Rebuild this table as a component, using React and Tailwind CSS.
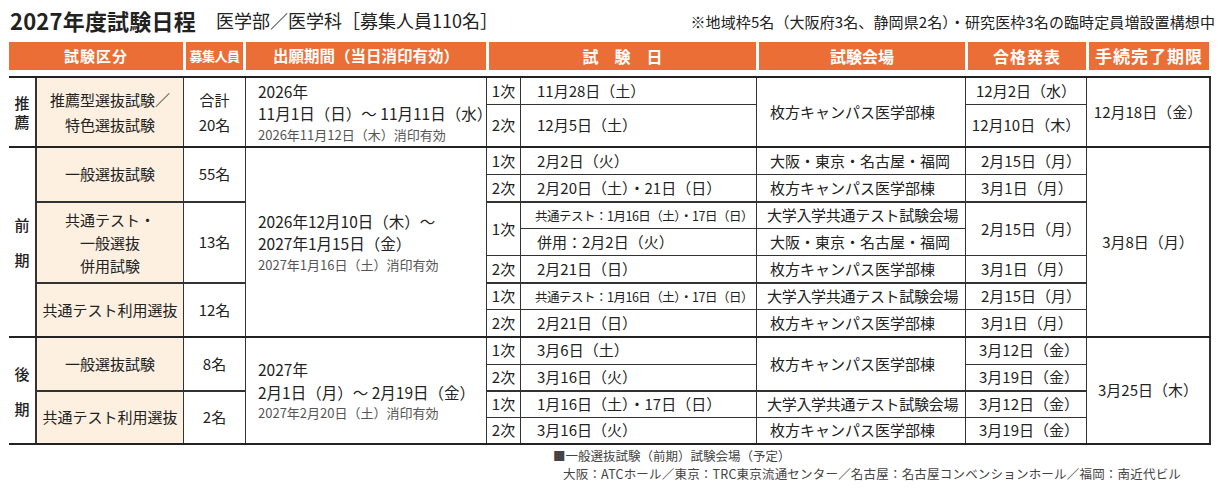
import React from 'react';

const font = "font-['Noto_Sans_CJK_JP','Noto_Sans',sans-serif]";
const cols = 'grid grid-cols-[26px_147px_61px_240px_33px_235px_208px_120px_122px] gap-px bg-[#333]';
const beige = 'bg-[#fdf0e1]';
// group start: thicker line on top
const g = 'border-t border-[#333]';

function C({ className = '', children }) {
  return <div className={`flex items-center bg-white ${className}`}>{children}</div>;
}

function B({ className = '', children }) {
  return (
    <div className={`flex items-center justify-center text-center border-l border-[#333] ${beige} ${className}`}>
      {children}
    </div>
  );
}

function Side({ a, b, gap = 'gap-[20px]' }) {
  return (
    <div className={`flex flex-col items-center ${gap} font-medium leading-none`}>
      <span>{a}</span>
      <span>{b}</span>
    </div>
  );
}

function Apply({ lines, note }) {
  return (
    <div className="pl-[12px] flex flex-col">
      {lines.map((l, i) => (
        <span key={i} className="text-[15.5px] leading-[22.5px]">{l}</span>
      ))}
      <span className="text-[13px] leading-[20px] text-[#555]">{note}</span>
    </div>
  );
}

const small = 'text-[12.5px] tracking-[-0.5px]';

export default function App() {
  return (
    <div className={`${font} w-[1220px] h-[492px] bg-white text-[#222] px-[9px] pt-[5px]`}>
      {/* title */}
      <div className="flex items-center h-[30px]">
        <span className="text-[22px] font-bold tracking-[0.2px] pl-[1px]">2027年度試験日程</span>
        <span className="text-[18px] ml-[20px]">医学部／医学科［募集人員110名］</span>
        <span className="ml-auto mr-[-4px] text-[15px] tracking-[0.1px] mt-[4px]">
          ※地域枠5名（大阪府3名、静岡県2名）・研究医枠3名の臨時定員増設置構想中
        </span>
      </div>

      {/* header */}
      <div className="flex gap-[3px] h-[28px] mt-[7px] text-white font-bold">
        <div className="w-[174px] bg-[#ea6e36] flex items-center justify-center text-[15px] tracking-[1px]">試験区分</div>
        <div className="w-[57px] bg-[#ea6e36] flex items-center justify-center text-[13px] tracking-[-0.5px]">募集人員</div>
        <div className="w-[240px] bg-[#ea6e36] flex items-center justify-center text-[15.5px]">出願期間（当日消印有効）</div>
        <div className="w-[267px] bg-[#ea6e36] flex items-center justify-center text-[16px]">試　験　日</div>
        <div className="w-[206px] bg-[#ea6e36] flex items-center justify-center text-[16px]">試験会場</div>
        <div className="w-[118px] bg-[#ea6e36] flex items-center justify-center text-[16px] tracking-[1px]">合格発表</div>
        <div className="w-[120px] bg-[#ea6e36] flex items-center justify-center text-[17px] tracking-[1px]">手続完了期限</div>
      </div>

      {/* body */}
      <div className="mt-[6px] border-y-2 border-[#222] divide-y-2 divide-[#222] text-[15px] leading-tight">
        {/* 推薦 */}
        <div className={`${cols} grid-rows-[26px_41px]`}>
          <C className="col-start-1 row-start-1 row-span-2 justify-center"><Side a="推" b="薦" gap="gap-[4px]" /></C>
          <B className="col-start-2 row-start-1 row-span-2">
            <div className="leading-[25px]">推薦型選抜試験／<br />特色選抜試験</div>
          </B>
          <C className="col-start-3 row-start-1 row-span-2 justify-center text-center">
            <div className="leading-[25px]">合計<br />20名</div>
          </C>
          <C className="col-start-4 row-start-1 row-span-2">
            <Apply lines={['2026年', '11月1日（日）～ 11月11日（水）']} note="2026年11月12日（木）消印有効" />
          </C>
          <C className="col-start-5 row-start-1 justify-center">1次</C>
          <C className="col-start-6 row-start-1 pl-[16px]">11月28日（土）</C>
          <C className="col-start-5 row-start-2 justify-center">2次</C>
          <C className="col-start-6 row-start-2 pl-[16px]">12月5日（土）</C>
          <C className="col-start-7 row-start-1 row-span-2 pl-[13px]">枚方キャンパス医学部棟</C>
          <C className="col-start-8 row-start-1 justify-center">12月2日（水）</C>
          <C className="col-start-8 row-start-2 justify-center">12月10日（木）</C>
          <C className="col-start-9 row-start-1 row-span-2 justify-center">12月18日（金）</C>
        </div>

        {/* 前期 */}
        <div className={`${cols} grid-rows-[repeat(7,26px)]`}>
          <C className="col-start-1 row-start-1 row-span-7 justify-center"><Side a="前" b="期" /></C>
          <B className="col-start-2 row-start-1 row-span-2">一般選抜試験</B>
          <B className={`col-start-2 row-start-3 row-span-3 ${g}`}>
            <div className="leading-[23px]">共通テスト・<br />一般選抜<br />併用試験</div>
          </B>
          <B className={`col-start-2 row-start-6 row-span-2 ${g}`}>共通テスト利用選抜</B>
          <C className="col-start-3 row-start-1 row-span-2 justify-center">55名</C>
          <C className={`col-start-3 row-start-3 row-span-3 justify-center ${g}`}>13名</C>
          <C className={`col-start-3 row-start-6 row-span-2 justify-center ${g}`}>12名</C>
          <C className="col-start-4 row-start-1 row-span-7">
            <Apply lines={['2026年12月10日（木）～', '2027年1月15日（金）']} note="2027年1月16日（土）消印有効" />
          </C>

          <C className="col-start-5 row-start-1 justify-center">1次</C>
          <C className="col-start-5 row-start-2 justify-center">2次</C>
          <C className={`col-start-5 row-start-3 row-span-2 justify-center ${g}`}>1次</C>
          <C className="col-start-5 row-start-5 justify-center">2次</C>
          <C className={`col-start-5 row-start-6 justify-center ${g}`}>1次</C>
          <C className="col-start-5 row-start-7 justify-center">2次</C>

          <C className="col-start-6 row-start-1 pl-[16px]">2月2日（火）</C>
          <C className="col-start-6 row-start-2 pl-[16px]">2月20日（土）・21日（日）</C>
          <C className={`col-start-6 row-start-3 pl-[14px] ${small} ${g}`}>共通テスト：1月16日（土）・17日（日）</C>
          <C className="col-start-6 row-start-4 pl-[16px]">併用：2月2日（火）</C>
          <C className="col-start-6 row-start-5 pl-[16px]">2月21日（日）</C>
          <C className={`col-start-6 row-start-6 pl-[14px] ${small} ${g}`}>共通テスト：1月16日（土）・17日（日）</C>
          <C className="col-start-6 row-start-7 pl-[16px]">2月21日（日）</C>

          <C className="col-start-7 row-start-1 pl-[13px]">大阪・東京・名古屋・福岡</C>
          <C className="col-start-7 row-start-2 pl-[13px]">枚方キャンパス医学部棟</C>
          <C className={`col-start-7 row-start-3 pl-[10px] tracking-[-0.3px] ${g}`}>大学入学共通テスト試験会場</C>
          <C className="col-start-7 row-start-4 pl-[13px]">大阪・東京・名古屋・福岡</C>
          <C className="col-start-7 row-start-5 pl-[13px]">枚方キャンパス医学部棟</C>
          <C className={`col-start-7 row-start-6 pl-[10px] tracking-[-0.3px] ${g}`}>大学入学共通テスト試験会場</C>
          <C className="col-start-7 row-start-7 pl-[13px]">枚方キャンパス医学部棟</C>

          <C className="col-start-8 row-start-1 pl-[15px]">2月15日（月）</C>
          <C className="col-start-8 row-start-2 pl-[15px]">3月1日（月）</C>
          <C className={`col-start-8 row-start-3 row-span-2 pl-[15px] ${g}`}>2月15日（月）</C>
          <C className="col-start-8 row-start-5 pl-[15px]">3月1日（月）</C>
          <C className={`col-start-8 row-start-6 pl-[15px] ${g}`}>2月15日（月）</C>
          <C className="col-start-8 row-start-7 pl-[15px]">3月1日（月）</C>

          <C className="col-start-9 row-start-1 row-span-7 justify-center">3月8日（月）</C>
        </div>

        {/* 後期 */}
        <div className={`${cols} grid-rows-[repeat(4,25.5px)]`}>
          <C className="col-start-1 row-start-1 row-span-4 justify-center"><Side a="後" b="期" /></C>
          <B className="col-start-2 row-start-1 row-span-2">一般選抜試験</B>
          <B className={`col-start-2 row-start-3 row-span-2 ${g}`}>共通テスト利用選抜</B>
          <C className="col-start-3 row-start-1 row-span-2 justify-center">8名</C>
          <C className={`col-start-3 row-start-3 row-span-2 justify-center ${g}`}>2名</C>
          <C className="col-start-4 row-start-1 row-span-4">
            <Apply lines={['2027年', '2月1日（月）～ 2月19日（金）']} note="2027年2月20日（土）消印有効" />
          </C>

          <C className="col-start-5 row-start-1 justify-center">1次</C>
          <C className="col-start-5 row-start-2 justify-center">2次</C>
          <C className={`col-start-5 row-start-3 justify-center ${g}`}>1次</C>
          <C className="col-start-5 row-start-4 justify-center">2次</C>

          <C className="col-start-6 row-start-1 pl-[16px]">3月6日（土）</C>
          <C className="col-start-6 row-start-2 pl-[16px]">3月16日（火）</C>
          <C className={`col-start-6 row-start-3 pl-[16px] ${g}`}>1月16日（土）・17日（日）</C>
          <C className="col-start-6 row-start-4 pl-[16px]">3月16日（火）</C>

          <C className="col-start-7 row-start-1 row-span-2 pl-[13px]">枚方キャンパス医学部棟</C>
          <C className={`col-start-7 row-start-3 pl-[10px] tracking-[-0.3px] ${g}`}>大学入学共通テスト試験会場</C>
          <C className="col-start-7 row-start-4 pl-[13px]">枚方キャンパス医学部棟</C>

          <C className="col-start-8 row-start-1 pl-[13px]">3月12日（金）</C>
          <C className="col-start-8 row-start-2 pl-[13px]">3月19日（金）</C>
          <C className={`col-start-8 row-start-3 pl-[13px] ${g}`}>3月12日（金）</C>
          <C className="col-start-8 row-start-4 pl-[13px]">3月19日（金）</C>

          <C className="col-start-9 row-start-1 row-span-4 justify-center">3月25日（木）</C>
        </div>
      </div>

      {/* notes */}
      <div className="ml-[544px] mt-[2px] text-[12.5px] leading-[18px] text-[#444] whitespace-nowrap">
        <div>■一般選抜試験（前期）試験会場（予定）</div>
        <div className="pl-[10px] tracking-[0.2px]">大阪：ATCホール／東京：TRC東京流通センター／名古屋：名古屋コンベンションホール／福岡：南近代ビル</div>
      </div>
    </div>
  );
}
